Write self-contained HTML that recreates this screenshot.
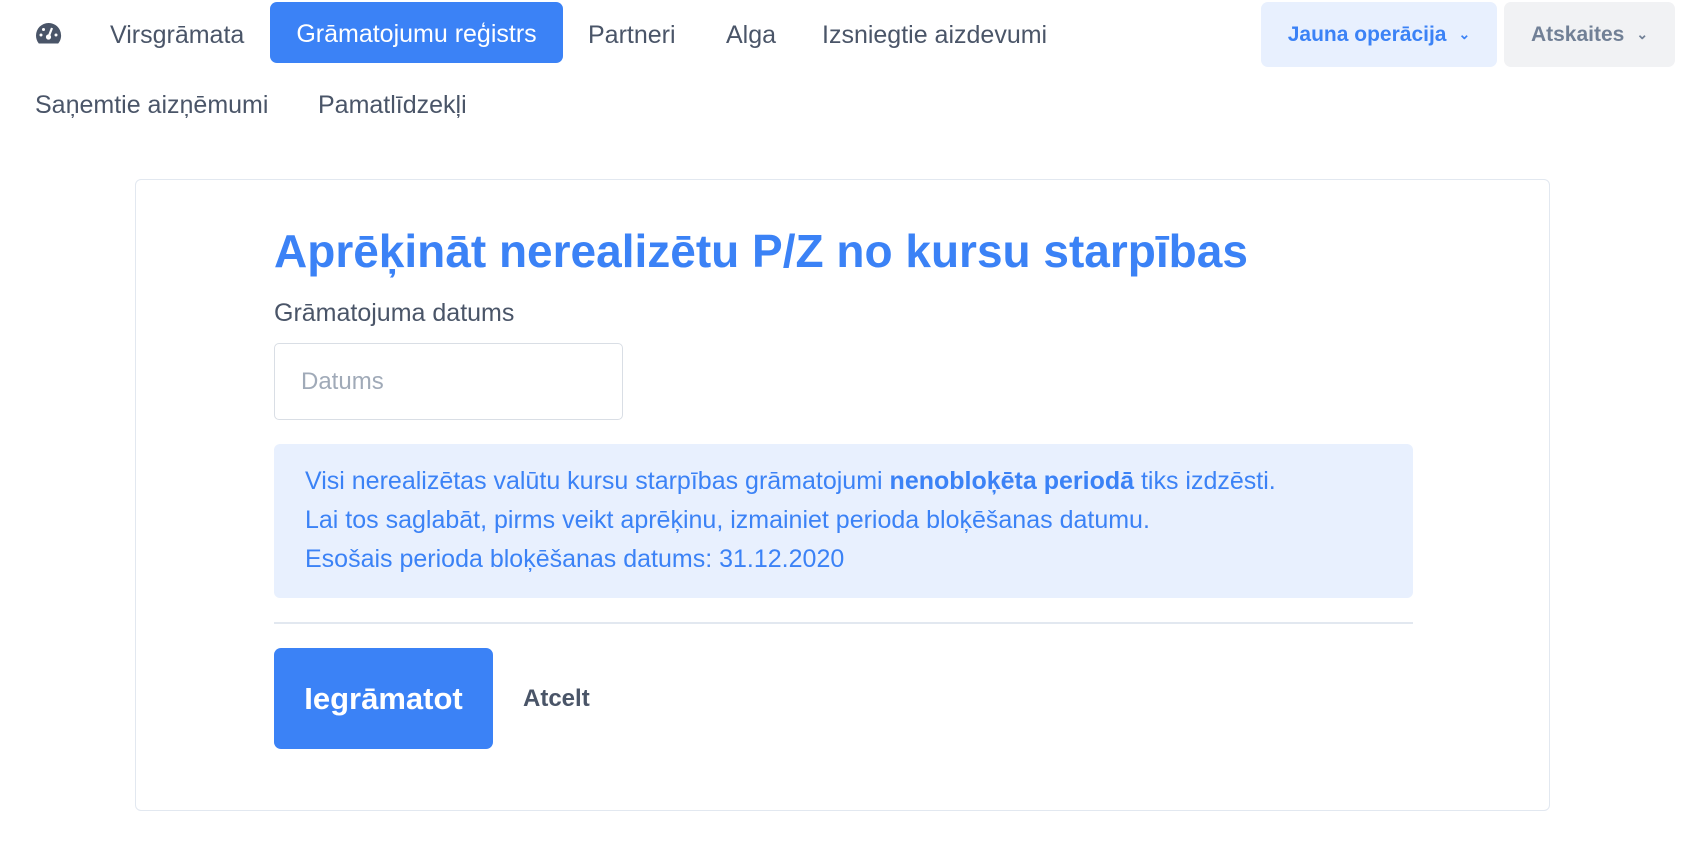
<!DOCTYPE html>
<html><head><meta charset="utf-8"><style>
*{margin:0;padding:0;box-sizing:border-box}
body{width:1684px;height:862px;background:#fff;font-family:"Liberation Sans",sans-serif;color:#4a5568;position:relative;overflow:hidden}
.a{position:absolute;white-space:nowrap}
.nav{font-size:25px;color:#4a5568;line-height:30px}
.btn{position:absolute;border-radius:7px;display:flex;align-items:center;justify-content:center;font-weight:bold;font-size:21px}
</style></head><body>
<svg class="a" style="left:35px;top:22px" width="27" height="23" viewBox="0 0 27 23"><path d="M13.5 1A12.5 12.5 0 0 0 1 13.5c0 3 1 5.8 2.8 8h19.4A12.5 12.5 0 0 0 13.5 1z" fill="#4a5568"/><circle cx="13.5" cy="15" r="2.6" fill="#fff"/><path d="M13.5 15L17 6" stroke="#fff" stroke-width="2.2"/><circle cx="6" cy="13" r="1.5" fill="#fff"/><circle cx="8.5" cy="7.5" r="1.5" fill="#fff"/><circle cx="21" cy="13" r="1.5" fill="#fff"/></svg>
<div class="a nav" style="left:110px;top:20px">Virsgrāmata</div>
<div class="btn" style="left:270px;top:2px;width:293px;height:61px;background:#3b82f6;color:#fff;font-weight:normal;font-size:25px;padding-top:3px">Grāmatojumu reģistrs</div>
<div class="a nav" style="left:588px;top:20px">Partneri</div>
<div class="a nav" style="left:726px;top:20px">Alga</div>
<div class="a nav" style="left:822px;top:20px">Izsniegtie aizdevumi</div>
<div class="a nav" style="left:35px;top:90px">Saņemtie aizņēmumi</div>
<div class="a nav" style="left:318px;top:90px">Pamatlīdzekļi</div>
<div class="btn" style="left:1261px;top:2px;width:236px;height:65px;background:#e8f0fe;color:#3b82f6">Jauna operācija <span style="font-size:14px;margin-left:12px">&#8964;</span></div>
<div class="btn" style="left:1504px;top:2px;width:171px;height:65px;background:#f1f2f4;color:#718096">Atskaites <span style="font-size:14px;margin-left:12px">&#8964;</span></div>
<div class="a" style="left:135px;top:179px;width:1415px;height:632px;border:1px solid #e2e8f0;border-radius:6px"></div>
<div class="a" style="left:274px;top:225px;font-size:46px;font-weight:bold;color:#3b82f6;line-height:52px">Aprēķināt nerealizētu P/Z no kursu starpības</div>
<div class="a" style="left:274px;top:298px;font-size:25px;line-height:30px;color:#4a5568">Grāmatojuma datums</div>
<div class="a" style="left:274px;top:343px;width:349px;height:77px;border:1px solid #d9dee5;border-radius:5px;font-size:24px;color:#a0aab8;padding:24px 0 0 26px">Datums</div>
<div class="a" style="left:274px;top:444px;width:1139px;height:154px;background:#e8f0fe;border-radius:6px;color:#3b82f6;font-size:25px;line-height:39px;padding:18px 0 0 31px">Visi nerealizētas valūtu kursu starpības grāmatojumi <b>nenobloķēta periodā</b> tiks izdzēsti.<br>Lai tos saglabāt, pirms veikt aprēķinu, izmainiet perioda bloķēšanas datumu.<br>Esošais perioda bloķēšanas datums: 31.12.2020</div>
<div class="a" style="left:274px;top:622px;width:1139px;height:2px;background:#e2e8f0"></div>
<div class="btn" style="left:274px;top:648px;width:219px;height:101px;background:#3b82f6;color:#fff;font-size:31px">Iegrāmatot</div>
<div class="a" style="left:523px;top:685px;font-size:24px;font-weight:bold;color:#4a5568">Atcelt</div>
</body></html>
